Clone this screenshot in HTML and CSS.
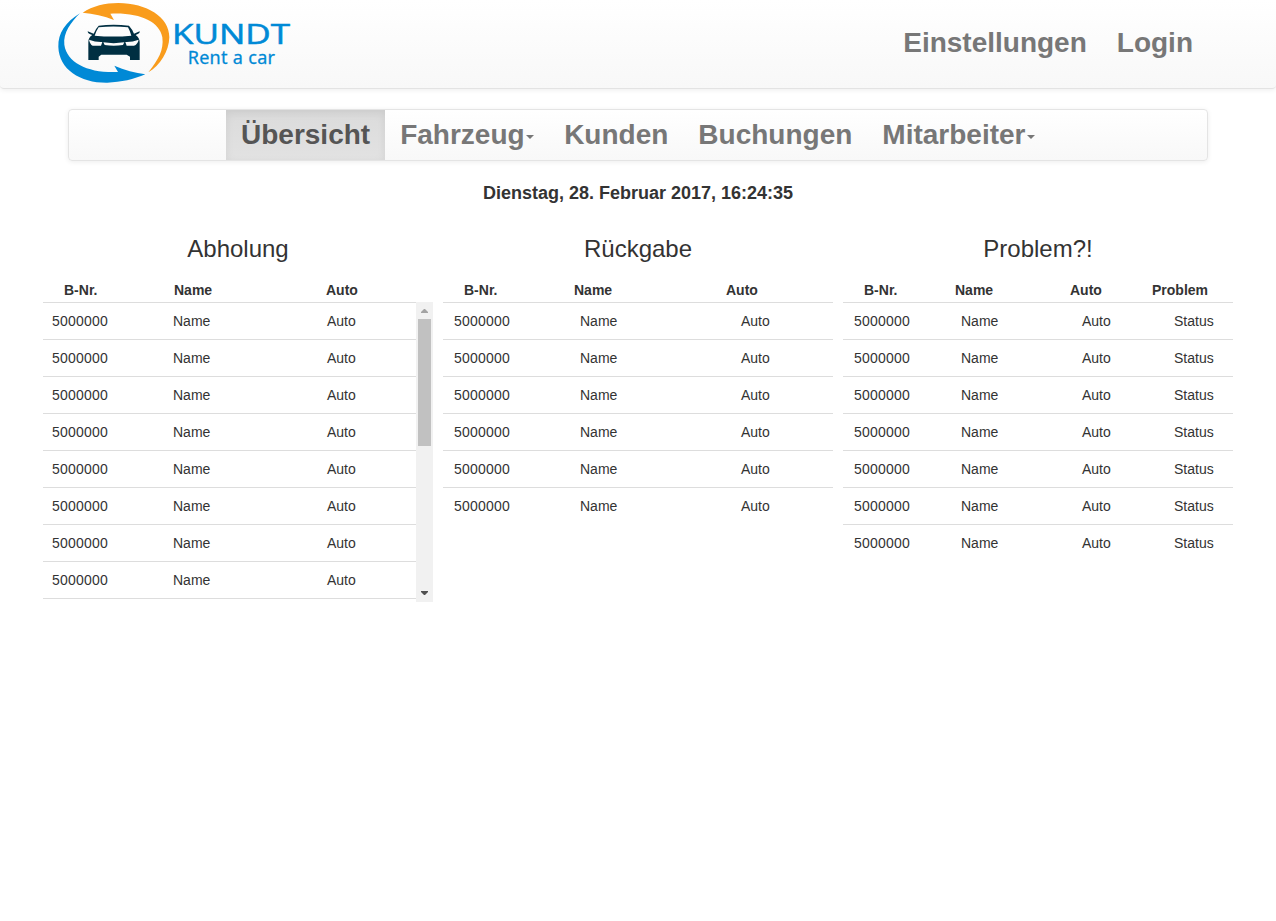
FILE: index.html
```html
<!DOCTYPE html>
<html lang="de">
<head>
<meta charset="utf-8">
<title>Kundt Rent a car</title>
<link rel="stylesheet" href="styles.css">
</head>
<body>
<header class="topbar">
  <svg class="logo" viewBox="0 0 750 264" role="img" aria-label="Kundt Rent a car">
    <path fill="#f99c1c" d="M98 38C128 18 165 9 205 9C290 10 358 50 358 112C357 155 330 197 295 217C325 180 342 150 337 112C329 65 270 37 181 41L192 60C162 47 130 41 98 38Z"/>
    <path fill="#0089d6" d="M90 40C46 66 24 101 25 140C27 209 92 249 172 248C213 247 252 238 286 223C256 219 223 210 193 197L204 216C118 220 51 190 43 134C39 99 63 66 90 40Z"/>
    <path fill="#002f42" fill-rule="evenodd" d="M146 77Q190 72 237 77Q247 88 252 101L269 94Q271 100 257 105Q269 114 269 127V180H240V170L230 164H154L146 170V180H115V126Q115 112 127 105Q113 102 113 94L131 101Q136 87 146 77ZM146 82Q139 92 134 107Q190 112 244 107Q240 93 234 82Q190 77 146 82ZM117 119Q120 133 128 137H153L157 126Q137 127 117 119ZM266 119Q246 127 226 126L230 137H252Q263 133 266 119ZM160 127L164 135Q191 140 219 135L223 127Q190 132 160 127Z"/>
    <text class="brand" x="366" y="132" font-size="82" textLength="354" lengthAdjust="spacingAndGlyphs">KUNDT</text>
    <text class="brand tagline" x="413" y="193" font-size="54" textLength="262" lengthAdjust="spacing">Rent a car</text>
  </svg>
  <nav class="account"><a>Einstellungen</a><a>Login</a></nav>
</header>
<nav class="mainnav">
  <a class="active">Übersicht</a>
  <a>Fahrzeug<span class="caret"></span></a>
  <a>Kunden</a>
  <a>Buchungen</a>
  <a>Mitarbeiter<span class="caret"></span></a>
</nav>
<div class="clock">Dienstag, 28. Februar 2017, 16:24:35</div>
<main class="panels">
  <section class="panel pickup">
    <h3>Abholung</h3>
    <div class="head"><b>B-Nr.</b><b>Name</b><b>Auto</b></div>
    <div class="scroller">
      <div class="rows">
        <div class="row"><i>5000000</i><span>Name</span><span>Auto</span></div>
        <div class="row"><i>5000000</i><span>Name</span><span>Auto</span></div>
        <div class="row"><i>5000000</i><span>Name</span><span>Auto</span></div>
        <div class="row"><i>5000000</i><span>Name</span><span>Auto</span></div>
        <div class="row"><i>5000000</i><span>Name</span><span>Auto</span></div>
        <div class="row"><i>5000000</i><span>Name</span><span>Auto</span></div>
        <div class="row"><i>5000000</i><span>Name</span><span>Auto</span></div>
        <div class="row"><i>5000000</i><span>Name</span><span>Auto</span></div>
        <div class="row"></div>
      </div>
      <div class="bar">
        <svg class="arrow" viewBox="0 0 17 17"><path fill="#a3a3a3" d="M5 11V10L8 7H9L12 10V11Z"/></svg>
        <div class="thumb"></div>
        <svg class="arrow" viewBox="0 0 17 17"><path fill="#505050" d="M5 6V7L8 10H9L12 7V6Z"/></svg>
      </div>
    </div>
  </section>
  <section class="panel dropoff">
    <h3>Rückgabe</h3>
    <div class="head"><b>B-Nr.</b><b>Name</b><b>Auto</b></div>
    <div class="rows">
      <div class="row"><i>5000000</i><span>Name</span><span>Auto</span></div>
      <div class="row"><i>5000000</i><span>Name</span><span>Auto</span></div>
      <div class="row"><i>5000000</i><span>Name</span><span>Auto</span></div>
      <div class="row"><i>5000000</i><span>Name</span><span>Auto</span></div>
      <div class="row"><i>5000000</i><span>Name</span><span>Auto</span></div>
      <div class="row"><i>5000000</i><span>Name</span><span>Auto</span></div>
    </div>
  </section>
  <section class="panel problem">
    <h3>Problem?!</h3>
    <div class="head"><b>B-Nr.</b><b>Name</b><b>Auto</b><b>Problem</b></div>
    <div class="rows">
      <div class="row"><i>5000000</i><span>Name</span><span>Auto</span><span>Status</span></div>
      <div class="row"><i>5000000</i><span>Name</span><span>Auto</span><span>Status</span></div>
      <div class="row"><i>5000000</i><span>Name</span><span>Auto</span><span>Status</span></div>
      <div class="row"><i>5000000</i><span>Name</span><span>Auto</span><span>Status</span></div>
      <div class="row"><i>5000000</i><span>Name</span><span>Auto</span><span>Status</span></div>
      <div class="row"><i>5000000</i><span>Name</span><span>Auto</span><span>Status</span></div>
      <div class="row"><i>5000000</i><span>Name</span><span>Auto</span><span>Status</span></div>
    </div>
  </section>
</main>
</body>
</html>
```
FILE: styles.css
```css
* { box-sizing: border-box; }
body { margin: 0; background: #fff; color: #333; font: 14px/20px "Liberation Sans", Arial, sans-serif; }
.topbar { display: flex; justify-content: space-between; height: 89px; padding: 0 68px 0 50px; border-bottom: 1px solid #e3e3e3; border-radius: 0 0 4px 4px; background: linear-gradient(#fff, #f8f8f8); box-shadow: 0 1px 5px rgba(0,0,0,.075); }
.logo { width: 250px; height: 88px; }
.brand { font-family: "Open Sans", "Noto Sans", sans-serif; fill: #0089d6; stroke: #0089d6; stroke-width: 1.6px; }
.tagline { font-family: "Noto Sans", "Open Sans", sans-serif; stroke-width: .8px; }
.account { display: flex; padding-top: 33px; }
.account a, .mainnav a { padding: 0 15px; color: #777; font-size: 28px; font-weight: bold; line-height: 20px; white-space: nowrap; }
.mainnav { display: flex; width: 1140px; height: 52px; margin: 20px auto 0; padding-left: 157px; border: 1px solid #e4e4e4; border-radius: 4px; background: linear-gradient(#fff, #f8f8f8); box-shadow: 0 1px 5px rgba(0,0,0,.075); }
.mainnav a { padding-top: 15px; }
.mainnav .active { color: #555; background: linear-gradient(#dbdbdb, #e2e2e2); box-shadow: inset 0 3px 9px rgba(0,0,0,.075); }
.caret { display: inline-block; margin-left: 1.5px; vertical-align: middle; border-top: 4px solid; border-right: 4px solid transparent; border-left: 4px solid transparent; }
.clock { margin-top: 22px; text-align: center; font-size: 18px; font-weight: bold; }
.panels { display: grid; grid-template-columns: repeat(3, 390px); gap: 10px; justify-content: center; margin-top: 33px; }
h3 { margin: 0; text-align: center; font-size: 24px; font-weight: normal; line-height: 26px; }
.head { display: grid; height: 40px; padding: 18px 0 0 21px; }
.row { display: grid; height: 37px; padding: 8px 0 0 11px; border-top: 1px solid #ddd; }
.row i { font-style: normal; letter-spacing: .2px; }
.head { grid-template-columns: 110px 152px 1fr; }
.row { grid-template-columns: 126px 161px 1fr; }
.pickup .row { grid-template-columns: 121px 154px 1fr; padding-left: 9px; }
.problem .head { grid-template-columns: 91px 115px 82px 1fr; }
.problem .row { grid-template-columns: 107px 121px 92px 1fr; }
.scroller { display: flex; height: 300px; overflow: hidden; }
.scroller .rows { flex: 1; }
.bar { display: flex; flex-direction: column; width: 17px; height: 300px; background: #f1f1f1; }
.arrow { width: 17px; height: 17px; flex: none; }
.thumb { height: 127px; margin: 0 2px auto; background: #c1c1c1; }
```
